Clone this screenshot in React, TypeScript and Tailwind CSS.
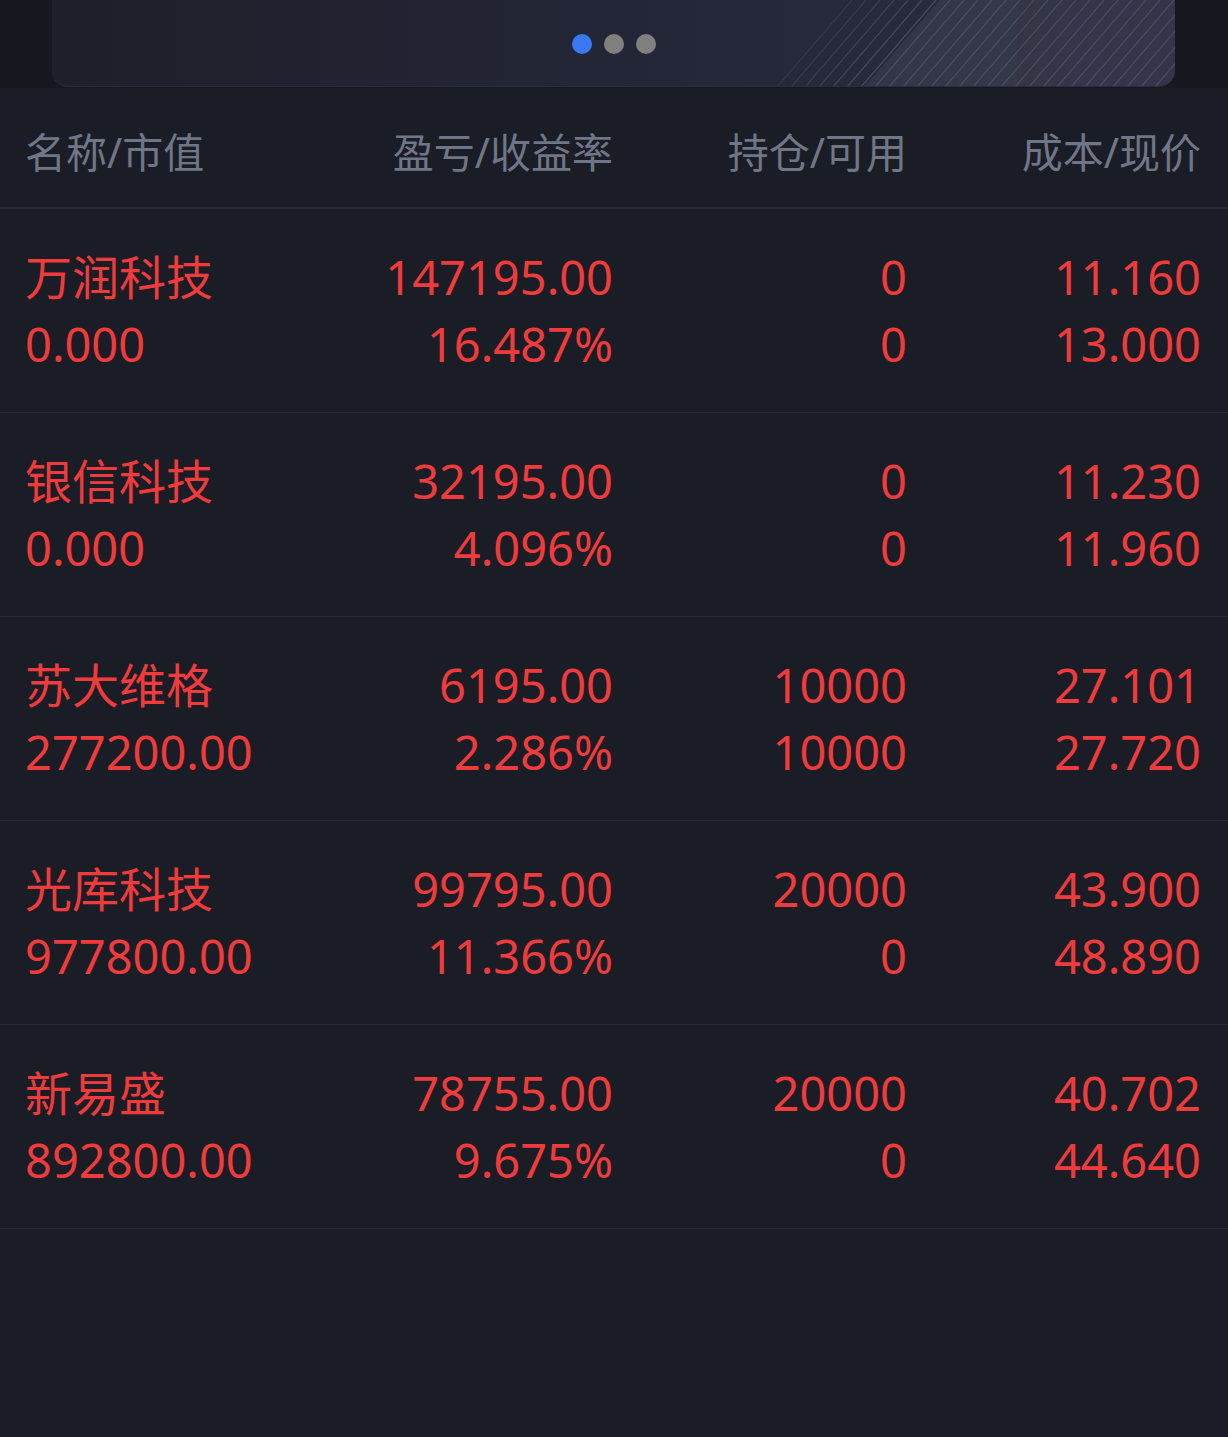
import React from "react";

const rows = [
  { name: "万润科技", mv: "0.000", pl: "147195.00", rate: "16.487%", pos: "0", avail: "0", cost: "11.160", price: "13.000" },
  { name: "银信科技", mv: "0.000", pl: "32195.00", rate: "4.096%", pos: "0", avail: "0", cost: "11.230", price: "11.960" },
  { name: "苏大维格", mv: "277200.00", pl: "6195.00", rate: "2.286%", pos: "10000", avail: "10000", cost: "27.101", price: "27.720" },
  { name: "光库科技", mv: "977800.00", pl: "99795.00", rate: "11.366%", pos: "20000", avail: "0", cost: "43.900", price: "48.890" },
  { name: "新易盛", mv: "892800.00", pl: "78755.00", rate: "9.675%", pos: "20000", avail: "0", cost: "40.702", price: "44.640" },
];

function Stripes() {
  const lines = [];
  for (let i = 0; i < 34; i++) {
    const x = 725 + i * 14;
    const op = i < 6 ? 0.35 + i * 0.08 : 0.85;
    lines.push(
      <line key={i} x1={x} y1={88} x2={x + 75} y2={0} stroke="#4d5269" strokeWidth={1.3} opacity={op} />
    );
  }
  return (
    <svg className="absolute inset-0 h-full w-full" viewBox="0 0 1123 87" preserveAspectRatio="none">
      <polygon points="813,87 888,0 1123,0 1123,87" fill="#ffffff" opacity={0.06} />
      {lines}
    </svg>
  );
}

export default function App() {
  return (
    <div
      className="min-h-[1437px] w-full bg-[#1b1d26] text-[#ef3b3b]"
      style={{ fontFamily: '"Noto Sans", "Noto Sans CJK SC", sans-serif' }}
    >
      {/* banner */}
      <div className="h-[88px] bg-[#16181f] pl-[52px] pr-[53px]">
        <div className="relative h-[87px] overflow-hidden rounded-b-[16px] border-b border-[#2a2d46] bg-gradient-to-r from-[#1d1f29] via-[#232636] to-[#2b2e40]">
          <Stripes />
          <div className="relative flex h-full items-center justify-center gap-[12px] pt-[1px]">
            <span className="h-[20px] w-[20px] rounded-full bg-[#3a78f2]" />
            <span className="h-[20px] w-[20px] rounded-full bg-[#808080]" />
            <span className="h-[20px] w-[20px] rounded-full bg-[#808080]" />
          </div>
        </div>
      </div>

      {/* header */}
      <div className="grid h-[121px] grid-cols-4 items-center border-b-2 border-[#262834] pl-[25px] pr-[27px] pt-[8px] text-[41px] leading-[48px] text-[#6f7686]">
        <div>名称/市值</div>
        <div className="text-right">盈亏/收益率</div>
        <div className="text-right">持仓/可用</div>
        <div className="text-right">成本/现价</div>
      </div>

      {/* rows */}
      {rows.map((r) => (
        <div
          key={r.name}
          className="grid h-[204px] grid-cols-4 content-center border-b border-[#272937] pl-[25px] pr-[27px] pt-[1px] text-[47px] leading-[67px]"
        >
          <div className="flex flex-col">
            <span>{r.name}</span>
            <span>{r.mv}</span>
          </div>
          <div className="flex flex-col text-right">
            <span>{r.pl}</span>
            <span>{r.rate}</span>
          </div>
          <div className="flex flex-col text-right">
            <span>{r.pos}</span>
            <span>{r.avail}</span>
          </div>
          <div className="flex flex-col text-right">
            <span>{r.cost}</span>
            <span>{r.price}</span>
          </div>
        </div>
      ))}
    </div>
  );
}
